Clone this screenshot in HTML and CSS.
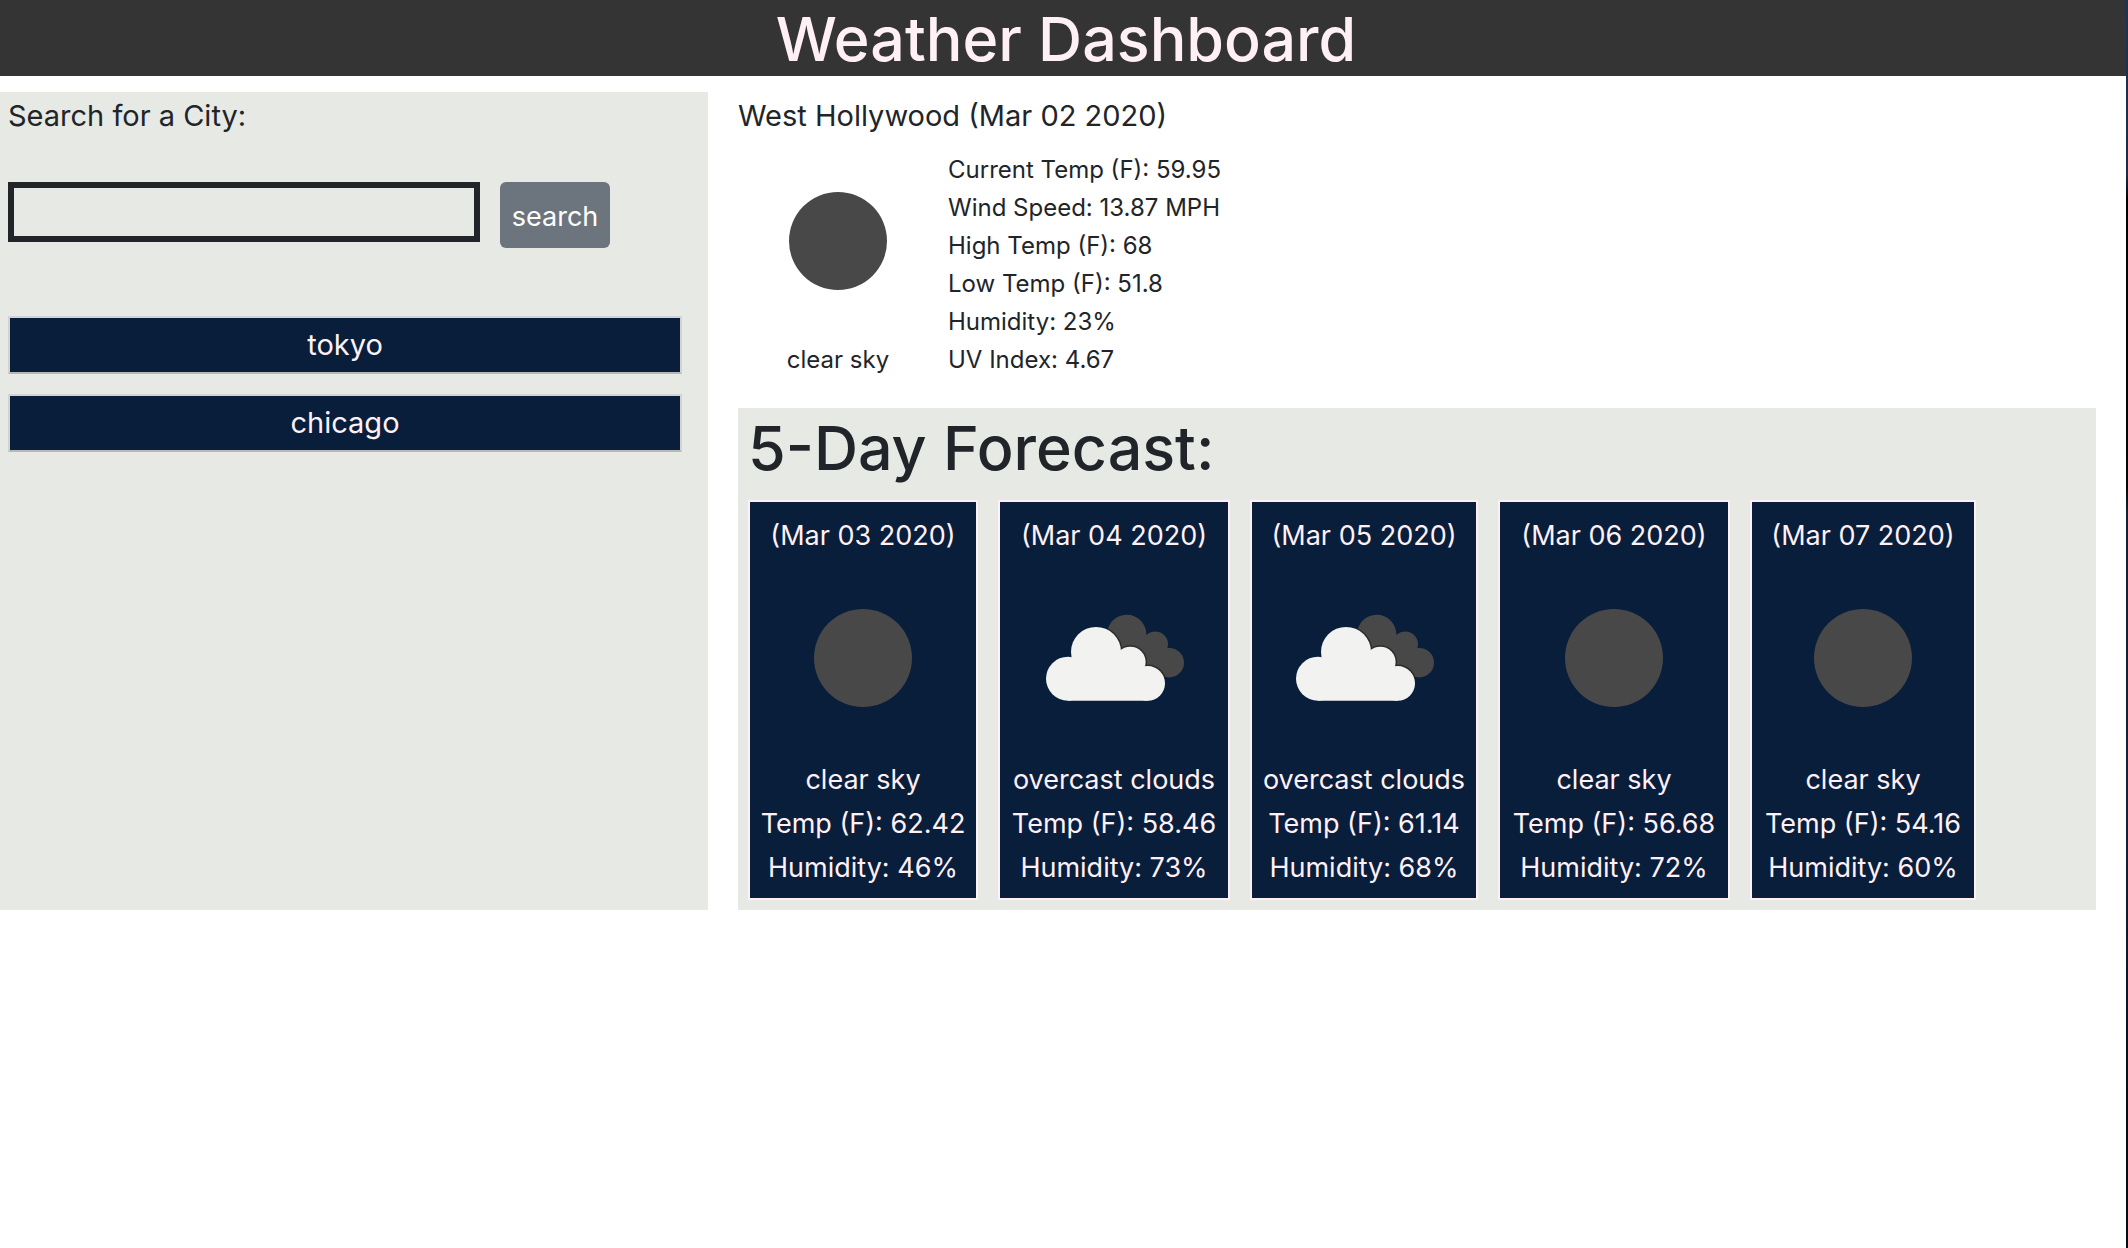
FILE: index.html
```html
<!DOCTYPE html>
<html lang="en">
<head>
<meta charset="utf-8">
<title>Weather Dashboard</title>
<link rel="stylesheet" href="styles.css">
</head>
<body>
<svg class="sprite" aria-hidden="true">
  <defs>
    <symbol id="clear" viewBox="0 0 200 200">
      <circle cx="100" cy="100" r="49" fill="#484849"/>
    </symbol>
    <clipPath id="back-shape">
      <circle cx="112.7" cy="76.5" r="19.7"/>
      <circle cx="141.3" cy="86.3" r="12.7"/>
      <circle cx="155.3" cy="104.7" r="14.7"/>
      <path d="M100 80L132 76L150 92L156 119L120 119Z"/>
    </clipPath>
    <g id="front-cloud">
      <circle cx="54" cy="120.7" r="22"/>
      <circle cx="82" cy="93.9" r="25"/>
      <circle cx="116.3" cy="104" r="15.3"/>
      <circle cx="133.7" cy="125.4" r="17.3"/>
      <path d="M54 142.7V110L82 90L118 100L134 120V142.7Z"/>
    </g>
    <symbol id="overcast" viewBox="0 0 200 200">
      <g clip-path="url(#back-shape)">
        <rect width="200" height="200" fill="#484849"/>
        <use href="#front-cloud" fill="#2c2c2d" stroke="#2c2c2d" stroke-width="3"/>
      </g>
      <use href="#front-cloud" fill="#f2f2f0"/>
    </symbol>
  </defs>
</svg>
<header class="banner"><h1>Weather Dashboard</h1></header>
<div class="layout">
  <aside class="sidebar">
    <form class="search" onsubmit="return false">
      <label for="city">Search for a City:</label>
      <div class="search-row">
        <input id="city" type="text">
        <button class="search-button" type="submit">search</button>
      </div>
    </form>
    <div class="history">
      <button type="button">tokyo</button>
      <button type="button">chicago</button>
    </div>
  </aside>
  <main class="content">
    <section class="current">
      <h2>West Hollywood (Mar 02 2020)</h2>
      <div class="current-row">
        <div class="condition">
          <svg class="icon" role="img" aria-label="clear sky"><use href="#clear"/></svg>
          <p>clear sky</p>
        </div>
        <div class="readings">
          <p>Current Temp (F): 59.95</p>
          <p>Wind Speed: 13.87 MPH</p>
          <p>High Temp (F): 68</p>
          <p>Low Temp (F): 51.8</p>
          <p>Humidity: 23%</p>
          <p>UV Index: 4.67</p>
        </div>
      </div>
    </section>
    <section class="forecast">
      <h2>5-Day Forecast:</h2>
      <div class="days">
        <article class="day">
          <h3>(Mar 03 2020)</h3>
          <svg class="icon" aria-hidden="true"><use href="#clear"/></svg>
          <p>clear sky</p><p>Temp (F): 62.42</p><p>Humidity: 46%</p>
        </article>
        <article class="day">
          <h3>(Mar 04 2020)</h3>
          <svg class="icon" aria-hidden="true"><use href="#overcast"/></svg>
          <p>overcast clouds</p><p>Temp (F): 58.46</p><p>Humidity: 73%</p>
        </article>
        <article class="day">
          <h3>(Mar 05 2020)</h3>
          <svg class="icon" aria-hidden="true"><use href="#overcast"/></svg>
          <p>overcast clouds</p><p>Temp (F): 61.14</p><p>Humidity: 68%</p>
        </article>
        <article class="day">
          <h3>(Mar 06 2020)</h3>
          <svg class="icon" aria-hidden="true"><use href="#clear"/></svg>
          <p>clear sky</p><p>Temp (F): 56.68</p><p>Humidity: 72%</p>
        </article>
        <article class="day">
          <h3>(Mar 07 2020)</h3>
          <svg class="icon" aria-hidden="true"><use href="#clear"/></svg>
          <p>clear sky</p><p>Temp (F): 54.16</p><p>Humidity: 60%</p>
        </article>
      </div>
    </section>
  </main>
</div>
</body>
</html>
```
FILE: styles.css
```css
* {
  box-sizing: border-box;
}

html {
  background: #fff;
}

body {
  margin: 0;
  min-height: 100vh;
  border-right: 2px solid;
  border-image: linear-gradient(#1d3358 0, #1b2c4c 14%, #020205 16%, #050506 39%, #131f33 41%, #13233c 65%, #020b1c 90%) 1;
  border-image-width: 0 2px 0 0;
  color: #212529;
  font-family: Inter, "Liberation Sans", sans-serif;
  font-size: 24px;
  line-height: 38px;
}

h1, h2, h3, p {
  margin: 0;
  font-weight: 400;
}

button, input {
  font: inherit;
}

.sprite {
  position: absolute;
  width: 0;
  height: 0;
}

.banner {
  padding: 2px 0 0 6px;
  background: #343434;
  color: #fff0f5;
  text-align: center;
}

.banner h1 {
  font-size: 61px;
  font-weight: 500;
  line-height: 74px;
}

.layout {
  display: grid;
  grid-template-columns: 708fr 1418fr;
  margin-top: 16px;
}

.sidebar {
  padding: 0 26px 0 8px;
  background: #e6e9e4;
}

.search label {
  display: block;
  font-size: 29px;
  line-height: 48px;
}

.search-row {
  display: flex;
  align-items: flex-start;
  gap: 20px;
  margin-top: 42px;
}

.search-row input {
  width: 70%;
  height: 60px;
  padding: 0 12px;
  border: 6px solid #212529;
  background: transparent;
  color: inherit;
}

.search-button {
  height: 66px;
  padding: 4px 12px 0;
  border: 0;
  border-radius: 6px;
  background: #6c757d;
  color: #fff;
  font-size: 27px;
}

.history {
  display: grid;
  gap: 20px;
  margin-top: 68px;
}

.history button {
  height: 58px;
  padding: 0;
  border: 2px solid #d3d3d3;
  border-bottom-color: #b8b8b8;
  background: #081e3b;
  color: #fff0f5;
  font-size: 29px;
}

.content {
  padding: 0 30px;
}

.current h2 {
  font-size: 29px;
  line-height: 48px;
}

.current-row {
  display: flex;
  gap: 10px;
  padding: 1px 0 29px;
}

.icon {
  display: block;
  width: 200px;
  height: 200px;
}

.condition {
  text-align: center;
}

.readings {
  padding-top: 10px;
}

.forecast {
  padding: 0 10px 10px;
  background: #e6e9e4;
}

.forecast h2 {
  padding: 2px 0 14px;
  font-size: 61px;
  font-weight: 500;
  line-height: 76px;
}

.days {
  display: grid;
  grid-template-columns: 230px 232px 228px 232px 226px;
  gap: 20px;
}

.day {
  display: flex;
  flex-direction: column;
  align-items: center;
  padding: 12px 0 8px;
  border: 2px solid #fff0f5;
  background: #081e3b;
  color: #fff0f5;
  font-size: 27px;
  line-height: 44px;
  white-space: nowrap;
}

.day h3 {
  font-size: inherit;
}
```
